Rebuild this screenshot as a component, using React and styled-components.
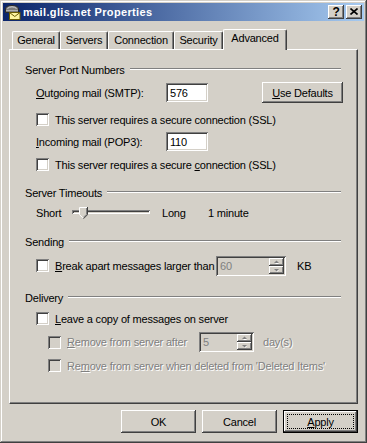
import React from 'react';
import styled, { createGlobalStyle, css } from 'styled-components';

const C = {
  face: '#D4D0C8',
  hi: '#FFFFFF',
  shadow: '#808080',
  dark: '#404040',
};

const raised = css`
  box-shadow: inset -1px -1px ${C.dark}, inset 1px 1px ${C.hi},
    inset -2px -2px ${C.shadow}, inset 2px 2px ${C.face};
`;

const sunken = css`
  box-shadow: inset 1px 1px ${C.shadow}, inset -1px -1px ${C.hi},
    inset 2px 2px ${C.dark}, inset -2px -2px ${C.face};
`;

const disabledText = css`
  color: ${C.shadow};
  text-shadow: 1px 1px 0 ${C.hi};
`;

const GlobalStyle = createGlobalStyle`
  html, body { margin: 0; padding: 0; background: ${C.face}; }
  body {
    font-family: 'Liberation Sans', Arial, sans-serif;
    font-size: 11px;
    letter-spacing: -0.2px;
    color: #000;
  }
`;

const Window = styled.div`
  box-sizing: border-box;
  width: 367px;
  height: 443px;
  padding: 3px;
  background: ${C.face};
  box-shadow: inset -1px -1px ${C.dark}, inset 1px 1px ${C.face},
    inset -2px -2px ${C.shadow}, inset 2px 2px ${C.hi};
  display: flex;
  flex-direction: column;
`;

const TitleBar = styled.div`
  height: 18px;
  flex: none;
  display: flex;
  align-items: center;
  padding: 0 2px;
  background: linear-gradient(to right, #0a246a, #a6caf0);
`;

const TitleText = styled.span`
  color: #fff;
  font-weight: bold;
  font-size: 11px;
  letter-spacing: 0.35px;
  margin-left: 2px;
  white-space: nowrap;
`;

const CaptionButtons = styled.div`
  margin-left: auto;
  display: flex;
  gap: 2px;
`;

const CaptionButton = styled.div`
  box-sizing: border-box;
  width: 16px;
  height: 14px;
  background: ${C.face};
  ${raised}
  display: flex;
  align-items: center;
  justify-content: center;
  font-weight: bold;
  font-size: 12px;
  line-height: 1;
  color: #000;
  padding-bottom: 1px;
`;

const Body = styled.div`
  flex: 1;
  display: flex;
  flex-direction: column;
  padding: 8px 6px 0 6px;
`;

const TabStrip = styled.div`
  display: flex;
  align-items: flex-end;
  height: 20px;
  padding-left: 3px;
`;

const Tab = styled.div`
  box-sizing: border-box;
  flex: none;
  width: ${(p) => p.$w}px;
  height: ${(p) => (p.$active ? 21 : 18)}px;
  background: ${C.face};
  border-top: 1px solid ${C.hi};
  border-left: 1px solid ${C.hi};
  border-right: 1px solid ${C.dark};
  border-top-left-radius: 2px;
  border-top-right-radius: 2px;
  box-shadow: inset -1px 0 ${C.shadow};
  display: flex;
  justify-content: center;
  align-items: flex-start;
  padding-top: 2px;
  white-space: nowrap;
  ${(p) =>
    p.$active &&
    css`
      margin-bottom: -1px;
      position: relative;
      z-index: 1;
    `}
`;

const Panel = styled.div`
  box-sizing: border-box;
  height: 355px;
  flex: none;
  border-top: 1px solid ${C.hi};
  border-left: 1px solid ${C.hi};
  border-right: 1px solid ${C.dark};
  border-bottom: 1px solid ${C.dark};
  box-shadow: inset -1px -1px ${C.shadow};
  padding: 13px 16px 0 15px;
  display: flex;
  flex-direction: column;
`;

const Group = styled.div`
  display: flex;
  align-items: center;
  height: 14px;
  margin-top: ${(p) => p.$mt || 0}px;
`;

const GroupTitle = styled.span`
  white-space: nowrap;
`;

const Rule = styled.div`
  flex: 1;
  margin-left: 5px;
  margin-top: -2px;
  border-top: 1px solid ${C.shadow};
  border-bottom: 1px solid ${C.hi};
`;

const Row = styled.div`
  display: flex;
  align-items: ${(p) => p.$align || 'center'};
  height: ${(p) => p.$h}px;
  margin-top: ${(p) => p.$mt || 0}px;
  padding-left: ${(p) => p.$indent || 0}px;
`;

const Label = styled.span`
  white-space: nowrap;
  flex: none;
  ${(p) => p.$w && css`width: ${p.$w}px;`}
  margin-left: ${(p) => p.$ml || 0}px;
  ${(p) => p.$disabled && disabledText}
`;

const Check = styled.span`
  box-sizing: border-box;
  flex: none;
  width: 13px;
  height: 13px;
  margin-top: ${(p) => p.$mt || 0}px;
  background: ${(p) => (p.$disabled ? C.face : C.hi)};
  ${sunken}
`;

const Edit = styled.div`
  box-sizing: border-box;
  flex: none;
  width: ${(p) => p.$w}px;
  height: ${(p) => p.$h || 19}px;
  margin-left: ${(p) => p.$ml || 0}px;
  background: ${(p) => (p.$disabled ? C.face : C.hi)};
  ${sunken}
  display: flex;
  align-items: center;
  padding: 2px 2px 2px 4px;
  color: ${(p) => (p.$disabled ? C.shadow : '#000')};
`;

const SpinColumn = styled.div`
  margin-left: auto;
  width: 15px;
  height: 100%;
  display: flex;
  flex-direction: column;
`;

const SpinButton = styled.div`
  flex: 1;
  background: ${C.face};
  ${raised}
  display: flex;
  align-items: center;
  justify-content: center;
`;

const SliderWrap = styled.div`
  position: relative;
  flex: none;
  width: 78px;
  height: 14px;
  margin-left: ${(p) => p.$ml || 0}px;
`;

const Track = styled.div`
  box-sizing: border-box;
  margin-top: 4px;
  height: 4px;
  background: ${C.face};
  ${sunken}
`;

const Thumb = styled.svg`
  position: absolute;
  left: 7px;
  top: 1px;
`;

const ButtonRow = styled.div`
  display: flex;
  justify-content: flex-end;
  gap: 6px;
  margin-top: 6px;
`;

const PushButton = styled.div`
  box-sizing: border-box;
  flex: none;
  width: ${(p) => p.$w || 75}px;
  height: ${(p) => p.$h || 23}px;
  margin-left: ${(p) => p.$ml || 0}px;
  background: ${C.face};
  display: flex;
  align-items: stretch;
  padding: 4px;
  ${(p) =>
    p.$default
      ? css`
          box-shadow: inset 0 0 0 1px #000, inset -2px -2px ${C.dark},
            inset 2px 2px ${C.hi}, inset -3px -3px ${C.shadow},
            inset 3px 3px ${C.face};
        `
      : raised}
`;

const ButtonFace = styled.span`
  flex: 1;
  display: flex;
  align-items: center;
  justify-content: center;
  white-space: nowrap;
  border: 1px ${(p) => (p.$focus ? 'dotted #000' : `solid transparent`)};
`;

const Arrow = ({ up }) => (
  <svg width="6" height="4" viewBox="0 0 6 4">
    <polygon
      points={up ? '1,4 3,2 5,4' : '1,2 3,4 5,2'}
      fill={C.hi}
    />
    <polygon
      points={up ? '0,3 2.5,0.5 5,3' : '0,1 2.5,3.5 5,1'}
      fill={C.shadow}
    />
  </svg>
);

const Spinner = ({ value, w, ml }) => (
  <Edit $w={w} $h={20} $ml={ml} $disabled>
    <span>{value}</span>
    <SpinColumn>
      <SpinButton>
        <Arrow up />
      </SpinButton>
      <SpinButton>
        <Arrow />
      </SpinButton>
    </SpinColumn>
  </Edit>
);

const MailIcon = () => (
  <svg width="16" height="16" viewBox="0 0 16 16">
    <path d="M0.5 5 Q0.5 1.5 7 1.5 Q13.5 1.5 13.5 5 L13.5 8.5 L0.5 8.5 Z" fill="#7c7c7c" stroke="#2a2a2a" />
    <path d="M2.5 4.5 Q4 2.8 7 2.8 Q10 2.8 11.5 4.5" fill="none" stroke="#d8d8d8" />
    <path d="M1 6.5 L13 6.5" stroke="#b0b0b0" />
    <rect x="4.5" y="8.5" width="10.5" height="7" fill="#fff6a0" stroke="#6b5c00" />
    <polyline points="4.5,8.5 9.75,12.5 15,8.5" fill="none" stroke="#6b5c00" />
  </svg>
);

const CloseGlyph = () => (
  <svg width="8" height="7" viewBox="0 0 8 7">
    <path d="M0.5 0.5 L7.5 6.5 M7.5 0.5 L0.5 6.5" stroke="#000" strokeWidth="1.6" />
  </svg>
);

const tabs = [
  { label: 'General', w: 48 },
  { label: 'Servers', w: 48 },
  { label: 'Connection', w: 66 },
  { label: 'Security', w: 49 },
  { label: 'Advanced', w: 64, active: true },
];

export default function App() {
  return (
    <>
      <GlobalStyle />
      <Window>
        <TitleBar>
          <MailIcon />
          <TitleText>mail.glis.net Properties</TitleText>
          <CaptionButtons>
            <CaptionButton>?</CaptionButton>
            <CaptionButton>
              <CloseGlyph />
            </CaptionButton>
          </CaptionButtons>
        </TitleBar>
        <Body>
          <TabStrip>
            {tabs.map((t) => (
              <Tab key={t.label} $w={t.w} $active={t.active}>
                {t.label}
              </Tab>
            ))}
          </TabStrip>
          <Panel>
            <Group>
              <GroupTitle>Server Port Numbers</GroupTitle>
              <Rule />
            </Group>
            <Row $h={21} $mt={5} $indent={11}>
              <Label $w={130}>
                <u>O</u>utgoing mail (SMTP):
              </Label>
              <Edit $w={42}>576</Edit>
              <PushButton $w={81} $h={21} $ml={54}>
                <ButtonFace>
                  <u>U</u>se Defaults
                </ButtonFace>
              </PushButton>
            </Row>
            <Row $h={13} $mt={10} $indent={11}>
              <Check />
              <Label $ml={6}>This server requires a secure connection (SSL)</Label>
            </Row>
            <Row $h={19} $mt={6} $indent={11}>
              <Label $w={130}>
                <u>I</u>ncoming mail (POP3):
              </Label>
              <Edit $w={42}>110</Edit>
            </Row>
            <Row $h={13} $mt={7} $indent={11}>
              <Check />
              <Label $ml={6}>
                This server requires a secure <u>c</u>onnection (SSL)
              </Label>
            </Row>

            <Group $mt={15}>
              <GroupTitle>Server Timeouts</GroupTitle>
              <Rule />
            </Group>
            <Row $h={14} $mt={6} $indent={11}>
              <Label $w={36}>Short</Label>
              <SliderWrap>
                <Track />
                <Thumb width="9" height="12" viewBox="0 0 9 12">
                  <polygon points="0,0 9,0 9,7.5 4.5,12 0,7.5" fill={C.face} />
                  <polyline points="0.5,7.5 0.5,0.5 8,0.5" fill="none" stroke={C.hi} />
                  <polyline points="0.5,7.7 4.3,11.3" fill="none" stroke={C.hi} />
                  <polyline points="8.5,0 8.5,7.7 4.5,11.7" fill="none" stroke={C.dark} />
                  <polyline points="7.5,1 7.5,7.3 4.5,10.3" fill="none" stroke={C.shadow} />
                </Thumb>
              </SliderWrap>
              <Label $w={46} $ml={12}>
                Long
              </Label>
              <Label>1 minute</Label>
            </Row>

            <Group $mt={15}>
              <GroupTitle>Sending</GroupTitle>
              <Rule />
            </Group>
            <Row $h={20} $mt={7} $indent={11}>
              <Check $mt={-2} />
              <Label $w={161} $ml={6}>
                <u>B</u>reak apart messages larger than
              </Label>
              <Spinner value="60" w={70} />
              <Label $ml={11}>KB</Label>
            </Row>

            <Group $mt={15}>
              <GroupTitle>Delivery</GroupTitle>
              <Rule />
            </Group>
            <Row $h={13} $mt={7} $indent={11}>
              <Check />
              <Label $ml={6}>
                <u>L</u>eave a copy of messages on server
              </Label>
            </Row>
            <Row $h={20} $mt={7} $indent={23}>
              <Check $disabled />
              <Label $w={132} $ml={6} $disabled>
                <u>R</u>emove from server after
              </Label>
              <Spinner value="5" w={55} />
              <Label $ml={9} $disabled>
                day(s)
              </Label>
            </Row>
            <Row $h={13} $mt={7} $indent={23}>
              <Check $disabled />
              <Label $ml={6} $disabled>
                Re<u>m</u>ove from server when deleted from 'Deleted Items'
              </Label>
            </Row>
          </Panel>
          <ButtonRow>
            <PushButton>
              <ButtonFace>OK</ButtonFace>
            </PushButton>
            <PushButton>
              <ButtonFace>Cancel</ButtonFace>
            </PushButton>
            <PushButton $default>
              <ButtonFace $focus>
                <u>A</u>pply
              </ButtonFace>
            </PushButton>
          </ButtonRow>
        </Body>
      </Window>
    </>
  );
}
